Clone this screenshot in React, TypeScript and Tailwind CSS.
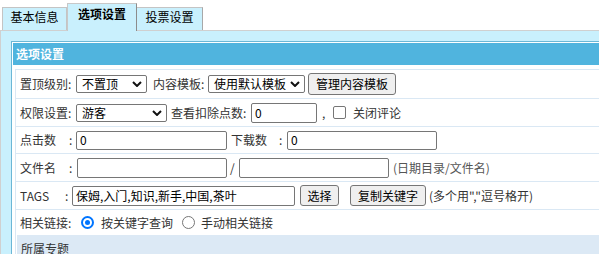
import React from "react";

const font = { fontFamily: '"Noto Sans CJK SC", "Noto Sans", sans-serif' };

function Chevron() {
  return (
    <svg width="10" height="6" viewBox="0 0 10 6" className="absolute right-[4px] top-1/2 -translate-y-1/2">
      <path d="M1 1 L5 5 L9 1" fill="none" stroke="#111" strokeWidth="2" />
    </svg>
  );
}

function Select({ w, text }: { w: string; text: string }) {
  return (
    <div className={`relative flex items-center h-[18px] ${w} border border-[#767676] rounded-[2px] bg-white pl-[5px] text-[12px] leading-[16px] text-black`}>
      <span>{text}</span>
      <Chevron />
    </div>
  );
}

function Input({ w, value, h = "h-[20px]" }: { w: string; value?: string; h?: string }) {
  return (
    <div className={`flex items-center ${h} ${w} border border-[#767676] rounded-[2px] bg-white pl-[3px] text-[12px] leading-[16px] text-black`}>
      {value}
    </div>
  );
}

function Button({ w, text, cls = "" }: { w: string; text: string; cls?: string }) {
  return (
    <div className={`flex items-center justify-center h-[21px] ${w} ${cls} border border-[#767676] rounded-[3px] bg-[#efefef] text-[12px] leading-[16px] text-black`}>
      {text}
    </div>
  );
}

function Radio({ checked, cls = "" }: { checked?: boolean; cls?: string }) {
  return checked ? (
    <span className={`flex items-center justify-center w-[13px] h-[13px] rounded-full border-[2px] border-[#0075ff] bg-white ${cls}`}>
      <span className="w-[5px] h-[5px] rounded-full bg-[#0075ff]" />
    </span>
  ) : (
    <span className={`w-[13px] h-[13px] rounded-full border border-[#767676] bg-white ${cls}`} />
  );
}

export default function App() {
  return (
    <div className="w-[599px] h-[254px] overflow-hidden bg-white text-[12px] leading-[16px] text-[#333]" style={font}>
      {/* Tabs */}
      <div className="flex items-end h-[31px] border-b border-[#d0d0d0] pl-[2px]">
        <div className="flex justify-center w-[65px] h-[23px] pt-[1px] border-t border-l border-r border-[#c4c4c4] bg-[#c9f0fd] text-black">
          基本信息
        </div>
        <div className="flex justify-center w-[70px] h-[28px] mb-[-1px] pt-[2px] border-t border-l border-r border-l-[#c8c8c8] border-t-[#c8c8c8] border-r-[#8c8c8c] bg-[#c9f0fd] font-bold text-black">
          选项设置
        </div>
        <div className="flex justify-center w-[66px] h-[23px] pt-[1px] border-t border-r border-[#c4c4c4] border-r-[#a8a8a8] bg-[#c9f0fd] text-black">
          投票设置
        </div>
      </div>

      {/* Panel */}
      <div className="bg-[#c9f0fd] border-l border-[#d0d0d0] pt-[10px] pl-[10px] h-[223px]">
        <div className="bg-white border-t border-l border-[#6bb7d6] pt-[1px] pl-[1px] h-full">
          <div className="flex items-center h-[22px] bg-[#50b4de] pl-[3px] text-white font-bold">选项设置</div>
          <div className="mt-[4px] ml-[2px] border-t border-l border-[#dae8f4]">
            {/* Row 1 */}
            <div className="flex items-center h-[29px] border-b border-[#dae8f4] pl-[4px]">
              <span className="w-[56px]">置顶级别:</span>
              <Select w="w-[71px]" text="不置顶" />
              <span className="ml-[6px] w-[55px]">内容模板:</span>
              <Select w="w-[97px]" text="使用默认模板" />
              <Button w="w-[88px]" text="管理内容模板" cls="ml-[3px] h-[22px]" />
            </div>
            {/* Row 2 */}
            <div className="flex items-center h-[28px] border-b border-[#dae8f4] pl-[4px]">
              <span className="w-[56px]">权限设置:</span>
              <Select w="w-[91px]" text="游客" />
              <span className="ml-[4px] w-[80px]">查看扣除点数:</span>
              <Input w="w-[66px]" value="0" />
              <span className="ml-[5px] w-[4px]">,</span>
              <span className="ml-[7px] w-[13px] h-[13px] rounded-[2px] border border-[#767676] bg-white" />
              <span className="ml-[7px]">关闭评论</span>
            </div>
            {/* Row 3 */}
            <div className="flex items-center h-[27px] border-b border-[#dae8f4] pl-[4px]">
              <span className="w-[49px]">点击数</span>
              <span className="w-[7px]">:</span>
              <Input w="w-[151px]" value="0" h="h-[19px]" />
              <span className="ml-[4px] w-[48px]">下载数</span>
              <span className="w-[8px]">:</span>
              <Input w="w-[150px]" value="0" h="h-[19px]" />
            </div>
            {/* Row 4 */}
            <div className="flex items-center h-[28px] border-b border-[#dae8f4] pl-[4px]">
              <span className="w-[49px]">文件名</span>
              <span className="w-[8px]">:</span>
              <Input w="w-[150px]" />
              <span className="ml-[3px] w-[9px]">/</span>
              <Input w="w-[150px]" />
              <span className="ml-[4px] text-[#555]">(日期目录/文件名)</span>
            </div>
            {/* Row 5 */}
            <div className="flex items-center h-[28px] border-b border-[#dae8f4] pl-[4px]">
              <span className="w-[45px]">TAGS</span>
              <span className="w-[7px]">:</span>
              <Input w="w-[223px]" value="保姆,入门,知识,新手,中国,茶叶" />
              <Button w="w-[39px]" text="选择" cls="ml-[5px]" />
              <Button w="w-[76px]" text="复制关键字" cls="ml-[11px]" />
              <span className="ml-[3px]">(多个用&quot;,&quot;逗号格开)</span>
            </div>
            {/* Row 6 */}
            <div className="flex items-center h-[25px] pl-[4px]">
              <span className="w-[61px]">相关链接:</span>
              <Radio checked />
              <span className="ml-[7px]">按关键字查询</span>
              <Radio cls="ml-[9px]" />
              <span className="ml-[6px]">手动相关链接</span>
            </div>
            {/* Row 7 */}
            <div className="flex items-center h-[28px] ml-[1px] bg-[#dce9f5] pl-[4px]">所属专题</div>
          </div>
        </div>
      </div>
    </div>
  );
}
